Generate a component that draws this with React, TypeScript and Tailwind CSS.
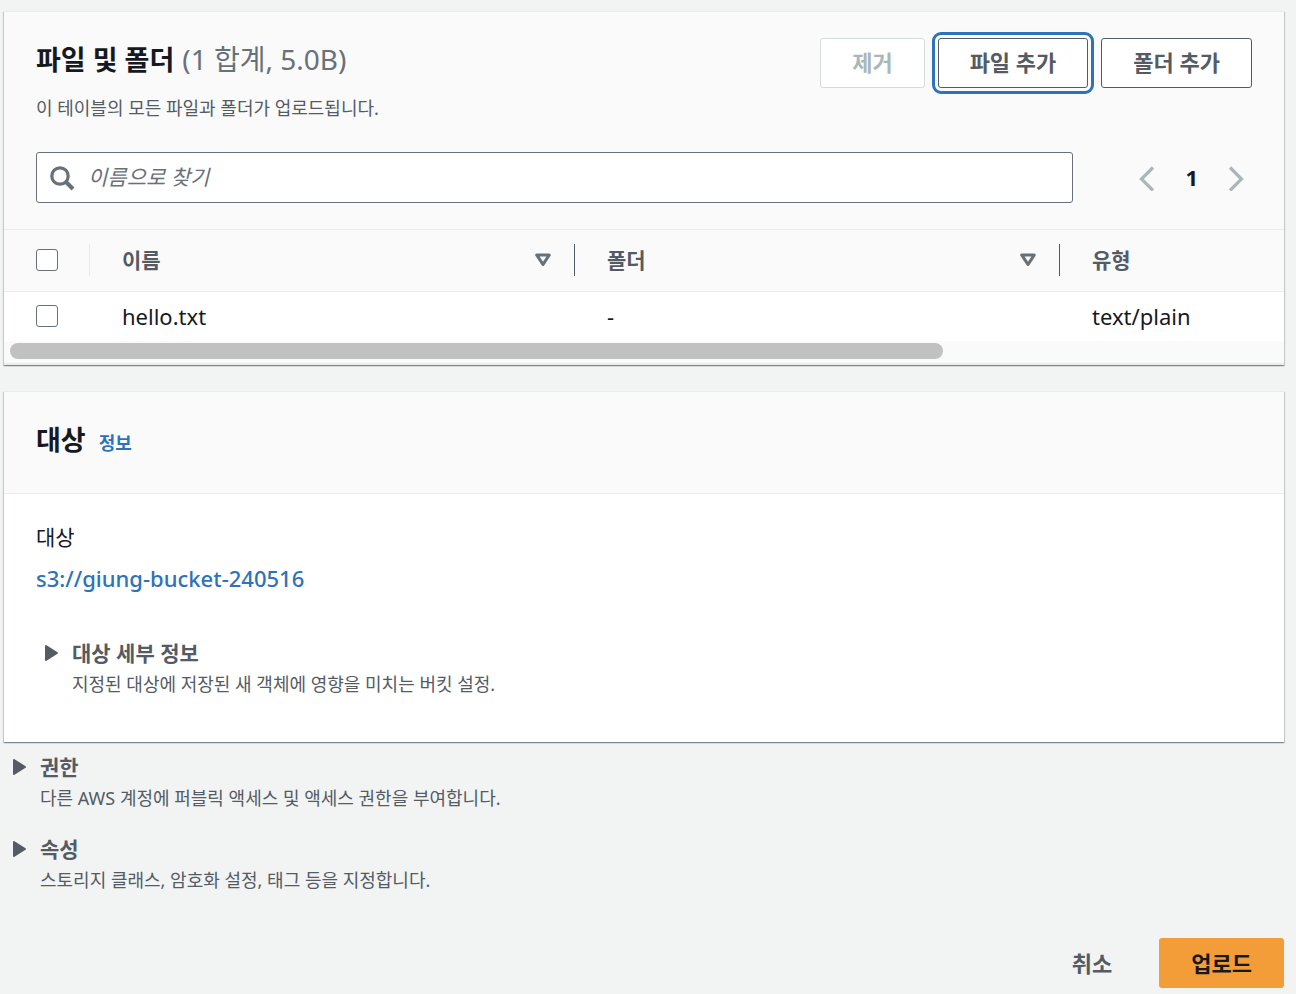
import { useState } from "react";
import type { ReactNode } from "react";

type UploadFile = { name: string; folder: string; type: string };

const files: UploadFile[] = [
    { name: "hello.txt", folder: "-", type: "text/plain" },
];

const cardClass =
    "border-t border-[#eaeded] bg-white shadow-[0_1px_1px_0_rgba(0,28,36,0.3),1px_1px_1px_0_rgba(0,28,36,0.15),-1px_1px_1px_0_rgba(0,28,36,0.15)]";

const buttonClass =
    "h-[50px] rounded-[3px] border bg-white px-[31px] pb-[2px] text-[22px] leading-8 font-bold";

const checkboxClass =
    "block size-[22px] appearance-none rounded-[3px] border border-[#687078] bg-white checked:bg-[#0073bb]";

const SortIcon = () => (
    <svg width="18" height="16" viewBox="0 0 18 16" fill="none">
        <path
            d="M2.8 3h12.4L9 12.5z"
            stroke="#687078"
            strokeWidth="3.2"
            strokeLinejoin="round"
        />
    </svg>
);

const Chevron = ({ direction }: { direction: "left" | "right" }) => (
    <svg width="16" height="26" viewBox="0 0 16 26" fill="none">
        <path
            d={
                direction === "left"
                    ? "M14 2.5 2.5 14 14 25.5"
                    : "M2 2.5 13.5 14 2 25.5"
            }
            stroke="#aab7b8"
            strokeWidth="3.2"
        />
    </svg>
);

const HeaderCell = ({ children }: { children: ReactNode }) => (
    <div className="flex h-8 items-center justify-between border-r border-[#545b64] pr-[22px] pl-8">
        {children}
        <button aria-label="정렬">
            <SortIcon />
        </button>
    </div>
);

const Expandable = ({
    title,
    description,
}: {
    title: string;
    description: string;
}) => {
    const [open, setOpen] = useState(false);

    return (
        <div className="text-[#545b64]">
            <button
                aria-expanded={open}
                onClick={() => setOpen(!open)}
                className="flex items-center gap-3 pl-2 text-[21px] leading-9 font-bold"
            >
                <svg
                    width="16"
                    height="18"
                    viewBox="0 0 16 18"
                    className={open ? "rotate-90" : ""}
                >
                    <path
                        d="M2 2v14l11-7z"
                        fill="#545b64"
                        stroke="#545b64"
                        strokeWidth="2"
                        strokeLinejoin="round"
                    />
                </svg>
                {title}
            </button>
            <p className="pl-9 text-[18px] leading-[26px]">{description}</p>
        </div>
    );
};

const App = () => {
    const [selected, setSelected] = useState<string[]>([]);

    const toggle = (name: string) =>
        setSelected((prev) =>
            prev.includes(name)
                ? prev.filter((n) => n !== name)
                : [...prev, name],
        );

    return (
        <main className="min-h-screen bg-[#f2f3f3] pt-[11px] pr-3 pb-[6px] pl-1 font-['Noto_Sans','Noto_Sans_CJK_KR',sans-serif] text-[22px] text-[#16191f]">
            {/* Files and folders */}
            <section className={cardClass}>
                <div className="border-b border-[#eaeded] bg-[#fafafa] px-8 py-[26px]">
                    <div className="flex items-start justify-between">
                        <div>
                            <h2 className="flex items-baseline gap-2 text-[27px] leading-[44px] font-bold">
                                파일 및 폴더
                                <span className="text-[28px] leading-none font-normal text-[#687078]">
                                    (1 합계, 5.0B)
                                </span>
                            </h2>
                            <p className="mt-3 text-[18px] leading-7 text-[#545b64]">
                                이 테이블의 모든 파일과 폴더가 업로드됩니다.
                            </p>
                        </div>
                        <div className="flex gap-[13px]">
                            <button
                                disabled
                                className={`${buttonClass} border-[#d5dbdb] text-[#aab7b8]`}
                            >
                                제거
                            </button>
                            <button
                                className={`${buttonClass} border-[#545b64] text-[#545b64] outline-3 outline-offset-3 outline-[#2e73b8]`}
                            >
                                파일 추가
                            </button>
                            <button
                                className={`${buttonClass} border-[#545b64] text-[#545b64]`}
                            >
                                폴더 추가
                            </button>
                        </div>
                    </div>

                    <div className="mt-[30px] flex items-center">
                        <label className="flex h-[51px] flex-1 items-center gap-[13px] rounded-[3px] border border-[#687078] bg-white px-3">
                            <svg
                                width="26"
                                height="26"
                                viewBox="0 0 26 26"
                                fill="none"
                                stroke="#687078"
                                strokeWidth="3.2"
                            >
                                <circle cx="11" cy="11" r="8.2" />
                                <path d="m17 17 7 7" strokeWidth="4" />
                            </svg>
                            <input
                                type="text"
                                aria-label="이름으로 찾기"
                                placeholder="이름으로 찾기"
                                className="min-w-0 flex-1 text-[21px] outline-none placeholder:text-[#687078] placeholder:italic"
                            />
                        </label>
                        <nav className="ml-[66px] flex items-center gap-[30px] pr-2">
                            <button disabled aria-label="이전 페이지">
                                <Chevron direction="left" />
                            </button>
                            <button className="font-bold">1</button>
                            <button disabled aria-label="다음 페이지">
                                <Chevron direction="right" />
                            </button>
                        </nav>
                    </div>
                </div>

                <div className="overflow-hidden">
                    <table className="w-[1746px] table-fixed text-left">
                        <thead>
                            <tr className="h-[61px] border-b border-[#eaeded] bg-[#fafafa] text-[21px] text-[#545b64]">
                                <th className="w-[86px]">
                                    <div className="flex h-8 items-center border-r border-[#eaeded] pl-8">
                                        <input
                                            type="checkbox"
                                            aria-label="모두 선택"
                                            checked={
                                                selected.length === files.length
                                            }
                                            onChange={(e) =>
                                                setSelected(
                                                    e.target.checked
                                                        ? files.map(
                                                              (f) => f.name,
                                                          )
                                                        : [],
                                                )
                                            }
                                            className={checkboxClass}
                                        />
                                    </div>
                                </th>
                                <th className="w-[485px]">
                                    <HeaderCell>이름</HeaderCell>
                                </th>
                                <th className="w-[485px]">
                                    <HeaderCell>폴더</HeaderCell>
                                </th>
                                <th className="pl-8">유형</th>
                            </tr>
                        </thead>
                        <tbody>
                            {files.map((file) => (
                                <tr key={file.name} className="h-[50px]">
                                    <td className="pl-8">
                                        <input
                                            type="checkbox"
                                            aria-label={file.name}
                                            checked={selected.includes(
                                                file.name,
                                            )}
                                            onChange={() => toggle(file.name)}
                                            className={checkboxClass}
                                        />
                                    </td>
                                    <td className="pl-8">{file.name}</td>
                                    <td className="pl-8">{file.folder}</td>
                                    <td className="pl-8">{file.type}</td>
                                </tr>
                            ))}
                        </tbody>
                    </table>
                </div>

                {/* Horizontal scroll bar */}
                <div className="border-b-2 border-[#eaeded] bg-[#fafafa] px-[6px] pt-[2px] pb-1">
                    <div className="h-4 w-[73.6%] rounded-full bg-[#c1c1c1]" />
                </div>
            </section>

            {/* Destination */}
            <section className={`${cardClass} mt-[26px]`}>
                <div className="flex items-baseline gap-[13px] border-b border-[#eaeded] bg-[#fafafa] px-8 pt-[26px] pb-[31px]">
                    <h2 className="text-[27px] leading-[44px] font-bold">
                        대상
                    </h2>
                    <a
                        href="#info"
                        className="text-[18px] font-bold text-[#2e73b8]"
                    >
                        정보
                    </a>
                </div>
                <div className="px-8 pt-[25px] pb-[45px]">
                    <p className="text-[21px] leading-9">대상</p>
                    <a
                        href="#bucket"
                        className="mt-[5px] inline-block leading-9 font-medium text-[#2e73b8]"
                    >
                        s3://giung-bucket-240516
                    </a>
                    <div className="mt-[39px]">
                        <Expandable
                            title="대상 세부 정보"
                            description="지정된 대상에 저장된 새 객체에 영향을 미치는 버킷 설정."
                        />
                    </div>
                </div>
            </section>

            <div className="mt-[7px] space-y-5">
                <Expandable
                    title="권한"
                    description="다른 AWS 계정에 퍼블릭 액세스 및 액세스 권한을 부여합니다."
                />
                <Expandable
                    title="속성"
                    description="스토리지 클래스, 암호화 설정, 태그 등을 지정합니다."
                />
            </div>

            {/* Actions */}
            <div className="mt-[45px] flex justify-end gap-4">
                <button className="h-[50px] px-[31px] font-bold text-[#545b64]">
                    취소
                </button>
                <button className="h-[50px] rounded-[3px] bg-[#f29d38] px-8 font-bold">
                    업로드
                </button>
            </div>
        </main>
    );
};

export default App;
